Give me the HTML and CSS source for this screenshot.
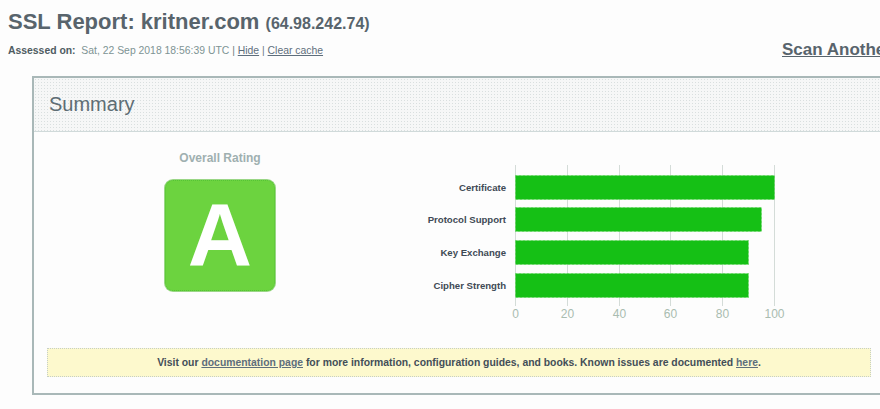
FILE: index.html
```html
<!DOCTYPE html>
<html>
<head>
<meta charset="utf-8">
<title>SSL Report: kritner.com</title>
<link rel="stylesheet" href="styles.css">
</head>
<body>
<div class="page">
  <header class="top">
    <div class="title-block">
      <h1 class="title">SSL Report: kritner.com <span class="ip">(64.98.242.74)</span></h1>
      <div class="assessed"><b>Assessed on:</b>&nbsp; <span class="date">Sat, 22 Sep 2018 18:56:39 UTC</span> | <a href="#">Hide</a> | <a href="#">Clear cache</a></div>
    </div>
    <a class="scan" href="#">Scan Another &raquo;</a>
  </header>

  <section class="box">
    <div class="box-head">Summary</div>
    <div class="box-body">
      <div class="row">
        <div class="rating">
          <div class="rating-label">Overall Rating</div>
          <div class="grade">A</div>
        </div>
        <svg class="chart" width="420" height="165" viewBox="0 0 420 165" xmlns="http://www.w3.org/2000/svg">
          <g stroke="#d4dcd8" stroke-width="1">
            <line x1="122.5" y1="5" x2="122.5" y2="146"/>
            <line x1="174.5" y1="5" x2="174.5" y2="146"/>
            <line x1="226.5" y1="5" x2="226.5" y2="146"/>
            <line x1="277.5" y1="5" x2="277.5" y2="146"/>
            <line x1="329.5" y1="5" x2="329.5" y2="146"/>
            <line x1="381.5" y1="5" x2="381.5" y2="146"/>
          </g>
          <g fill="#15c015" stroke="#4fd34a" stroke-width="1" stroke-dasharray="1 3">
            <rect x="122.5" y="15.5" width="259" height="24"/>
            <rect x="122.5" y="47.5" width="246" height="24"/>
            <rect x="122.5" y="80.5" width="233" height="24"/>
            <rect x="122.5" y="113.5" width="233" height="24"/>
          </g>
          <g class="bar-label" text-anchor="end">
            <text x="113" y="31">Certificate</text>
            <text x="113" y="63">Protocol Support</text>
            <text x="113" y="96">Key Exchange</text>
            <text x="113" y="129">Cipher Strength</text>
          </g>
          <g class="axis-label" text-anchor="middle">
            <text x="122.5" y="158">0</text>
            <text x="174.5" y="158">20</text>
            <text x="226.5" y="158">40</text>
            <text x="277.5" y="158">60</text>
            <text x="329.5" y="158">80</text>
            <text x="381.5" y="158">100</text>
          </g>
        </svg>
      </div>
      <div class="notice">Visit our <a href="#">documentation page</a> for more information, configuration guides, and books. Known issues are documented <a href="#">here</a>.</div>
    </div>
  </section>
</div>
</body>
</html>
```

FILE: styles.css
```css
html, body {
  margin: 0;
  padding: 0;
  overflow: hidden;
  background: #fdfdfd;
}
body {
  font-family: "Liberation Sans", Arial, sans-serif;
  color: #58646c;
}
.page {
  width: 1000px;
  padding: 0 0 0 8px;
}
.top {
  display: grid;
  grid-template-columns: 774px auto;
  align-items: start;
}
.title {
  margin: 0;
  padding-top: 9px;
  font-size: 22px;
  line-height: 25px;
  font-weight: bold;
  color: #58646c;
}
.ip {
  font-size: 16px;
}
.assessed {
  margin-top: 8px;
  font-size: 10.4px;
  line-height: 14px;
  color: #6f7e80;
}
.assessed b {
  color: #4f5c62;
}
.date {
  color: #7e9494;
}
.assessed a {
  color: #5e6e7c;
}
.scan {
  margin-top: 40px;
  font-size: 17px;
  font-weight: bold;
  color: #58646c;
  white-space: nowrap;
  line-height: 20px;
}
.box {
  margin: 16px 0 0 24px;
  width: 850px;
  border: 2px solid #a9b8b8;
}
.box-head {
  height: 53px;
  padding-left: 15px;
  font-size: 20px;
  line-height: 53px;
  color: #5e6d74;
  background-color: #f6f7f7;
  background-image: radial-gradient(#d9dfdf 0.7px, transparent 0.8px);
  background-size: 3px 3px;
  border-bottom: 1px solid #d0dada;
}
.box-body {
  padding: 0 13px 16px;
  background: #fdfdfd;
}
.row {
  display: flex;
  height: 193px;
}
.rating {
  width: 346px;
  display: flex;
  flex-direction: column;
  align-items: center;
  padding-top: 19px;
}
.rating-label {
  font-size: 12px;
  font-weight: bold;
  line-height: 14px;
  color: #9fb0b0;
}
.grade {
  margin-top: 15px;
  width: 108px;
  height: 109px;
  border: 1px dotted #55c435;
  border-radius: 8px;
  background: #6cd33f;
  color: #fff;
  font-size: 89px;
  font-weight: bold;
  line-height: 109px;
  text-align: center;
  box-shadow: 0 0 0 1px #9ad686;
}
.chart {
  display: block;
  margin-top: 28px;
}
.bar-label {
  font-family: "Liberation Sans", Arial, sans-serif;
  font-size: 9.6px;
  font-weight: bold;
  fill: #3f4a55;
}
.axis-label {
  font-family: "Liberation Sans", Arial, sans-serif;
  font-size: 12px;
  fill: #a9bcb0;
}
.notice {
  margin-top: 23px;
  height: 27px;
  line-height: 27px;
  background: #fdf9cd;
  border: 1px dotted #c6cfc6;
  text-align: center;
  font-size: 10.4px;
  font-weight: bold;
  color: #434e58;
}
.notice a {
  color: #5e6e7c;
}
```
